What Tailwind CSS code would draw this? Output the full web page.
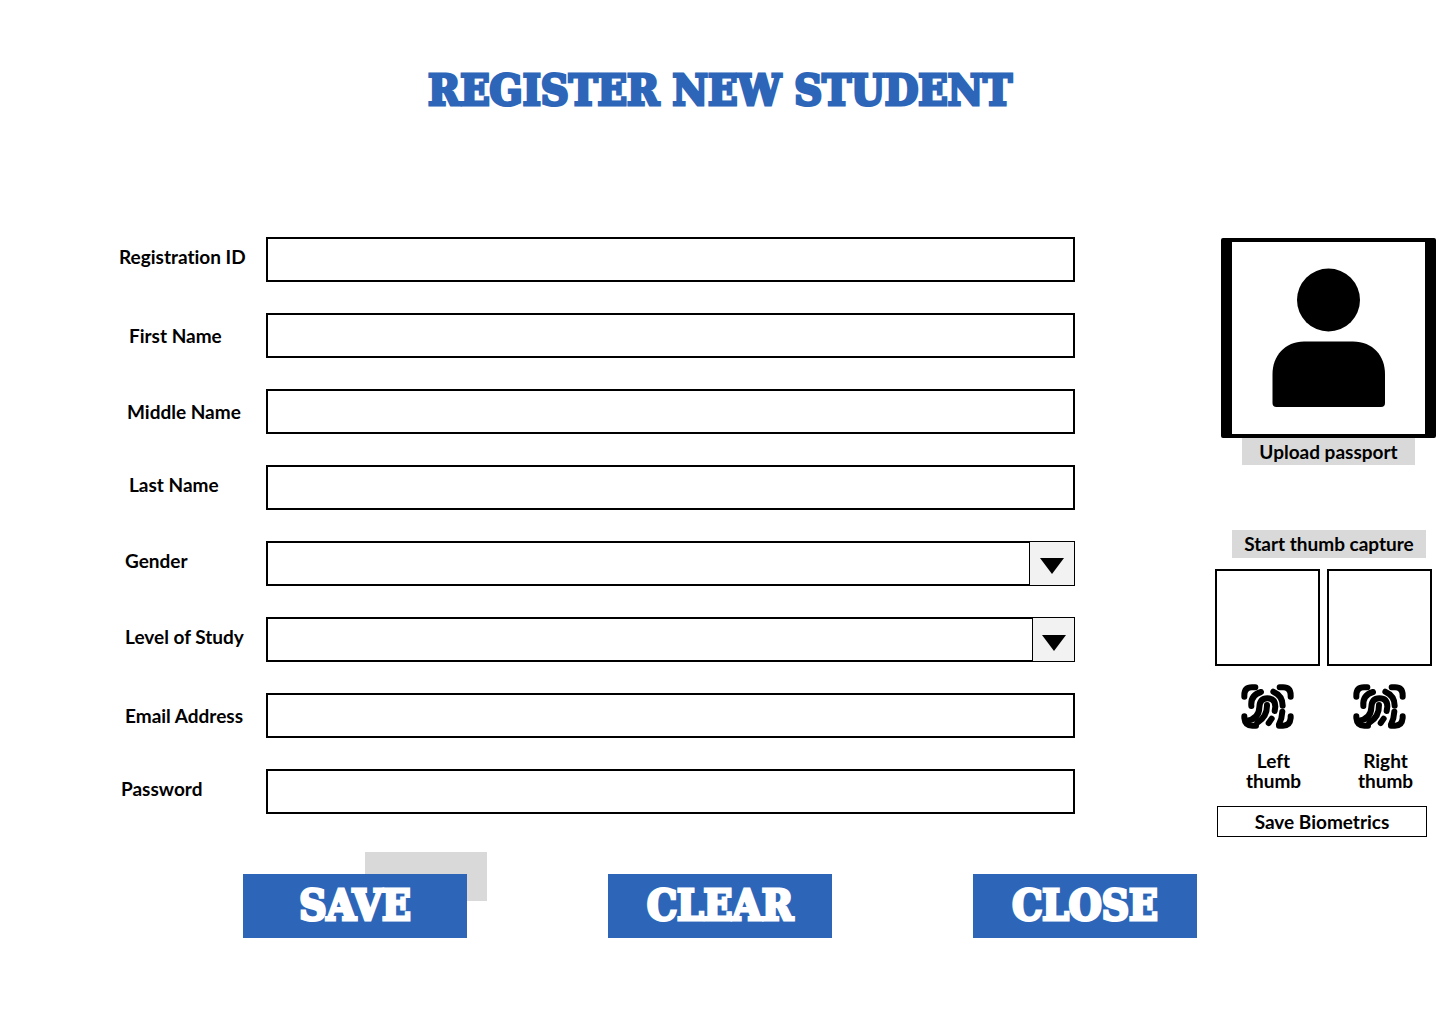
<!DOCTYPE html>
<html lang="en">
<head>
<meta charset="utf-8">
<meta name="viewport" content="width=device-width, initial-scale=1">
<title>Register New Student</title>
<script src="https://cdn.jsdelivr.net/npm/@tailwindcss/browser@4"></script>
</head>
<body class="min-h-screen bg-white font-['Lato',sans-serif] text-[19px] leading-7 font-bold text-black [font-variant-ligatures:none]">
<svg class="hidden" aria-hidden="true">
  <symbol id="fingerprint" viewBox="35 28 159 135">
    <g fill="none" stroke="currentColor" stroke-width="18" stroke-linecap="round" stroke-linejoin="round">
      <path d="M45 66V62Q45 38 68 38H78M151 38H161Q184 38 184 62V66M45 125V130Q47 153 69 153H80M184 125V130Q182 153 161 153H149"/>
      <path d="M66 94Q63 61 95 52M132 51Q160 63 160 93"/>
      <path d="M52 138Q89 133 90 98Q91 71 114 71Q138 71 138 96L136 109"/>
      <path d="M113 91Q114 126 84 144M127 132L118 145M159 111Q158 132 149 149"/>
    </g>
  </symbol>
</svg>
<header class="pt-[60px] text-center">
  <h1 class="font-['DejaVu_Serif_Condensed','DejaVu_Serif',serif] text-[43px] leading-[60px] font-bold text-[#2d66b9] [-webkit-text-stroke:3px_#2d66b9]">REGISTER NEW STUDENT</h1>
</header>
<main class="pt-[117px] pb-[86px]">
  <div class="flex items-start gap-[140px] pl-[119px]">
    <form id="student" class="grid flex-1 auto-rows-[45px] grid-cols-[147px_1fr] items-center gap-y-[31px]">
      <label for="reg" class="pb-1.5">Registration ID</label>
      <input id="reg" type="text" class="h-full w-full border-2 border-black px-3">
      <label for="first" class="pl-2.5">First Name</label>
      <input id="first" type="text" class="h-full w-full border-2 border-black px-3">
      <label for="middle" class="pl-2">Middle Name</label>
      <input id="middle" type="text" class="h-full w-full border-2 border-black px-3">
      <label for="last" class="pb-1.5 pl-2.5">Last Name</label>
      <input id="last" type="text" class="h-full w-full border-2 border-black px-3">
      <label for="gender" class="pb-1.5 pl-1.5">Gender</label>
      <div class="relative h-full">
        <select id="gender" class="h-full w-full appearance-none border-2 border-black px-3"><option></option></select>
        <span class="pointer-events-none absolute inset-y-0 right-0 flex w-[46px] items-center justify-center border border-black bg-[#f2f2f2]">
          <svg class="mt-1 h-4 w-6" viewBox="0 0 24 16"><path d="M0 0H24L12 16Z"/></svg>
        </span>
      </div>
      <label for="level" class="pb-1.5 pl-1.5">Level of Study</label>
      <div class="relative h-full">
        <select id="level" class="h-full w-full appearance-none border-2 border-black px-3"><option></option></select>
        <span class="pointer-events-none absolute inset-y-0 right-0 flex w-[43px] items-center justify-center border border-black bg-[#f2f2f2]">
          <svg class="mt-1.5 h-4 w-6" viewBox="0 0 24 16"><path d="M0 0H24L12 16Z"/></svg>
        </span>
      </div>
      <label for="email" class="pl-1.5">Email Address</label>
      <input id="email" type="email" class="h-full w-full border-2 border-black px-3">
      <label for="password" class="pb-1.5 pl-0.5">Password</label>
      <input id="password" type="password" class="h-full w-full border-2 border-black px-3">
    </form>
    <aside class="flex w-[225px] flex-col pt-px">
      <div class="mr-1 ml-[6px] flex h-[200px] items-center justify-center rounded-xs border-x-[11px] border-y-4 border-black">
        <svg class="h-[140px] w-[114px]" viewBox="0 0 114 140" role="img" aria-label="Passport photo"><circle cx="56.500" cy="32" r="31.500"/><path d="M32 73.500H81C101 73.500 113 88 113 106V135Q113 139 109 139H4.500Q.5 139 .5 135V106C.5 88 13 73.500 32 73.500Z"/></svg>
      </div>
      <button type="button" class="ml-[27px] h-[27px] w-[173px] bg-[#d9d9d9] leading-7">Upload passport</button>
      <button type="button" class="mt-[65px] ml-[17px] h-7 w-[194px] bg-[#d9d9d9] leading-7">Start thumb capture</button>
      <div class="mt-[11px] flex gap-[7px]">
        <div class="h-[97px] w-[105px] border-2 border-black"></div>
        <div class="h-[97px] w-[105px] border-2 border-black"></div>
      </div>
      <div class="mt-[18px] flex gap-[7px] leading-5">
        <div class="flex w-[105px] flex-col items-center gap-[22px]">
          <svg class="h-[45px] w-[53px]"><use href="#fingerprint"/></svg>
          <p class="pl-3 text-center">Left<br>thumb</p>
        </div>
        <div class="flex w-[105px] flex-col items-center gap-[22px]">
          <svg class="h-[45px] w-[53px]"><use href="#fingerprint"/></svg>
          <p class="pl-3 text-center">Right<br>thumb</p>
        </div>
      </div>
      <button type="button" class="mt-[15px] ml-0.5 h-[31px] w-[210px] border border-black leading-7">Save Biometrics</button>
    </aside>
  </div>
  <div class="mt-[37px] flex justify-between px-[243px] font-['DejaVu_Serif_Condensed','DejaVu_Serif',serif] text-[42px]">
    <div class="relative">
      <div class="absolute -top-[22px] left-[122px] h-[49px] w-[122px] bg-[#d9d9d9]"></div>
      <button type="submit" form="student" class="relative h-16 w-56 bg-[#2d66b9] text-white [-webkit-text-stroke:3px_white]">SAVE</button>
    </div>
    <button type="reset" form="student" class="h-16 w-56 bg-[#2d66b9] text-white [-webkit-text-stroke:3px_white]">CLEAR</button>
    <button type="button" class="h-16 w-56 bg-[#2d66b9] text-white [-webkit-text-stroke:3px_white]">CLOSE</button>
  </div>
</main>
</body>
</html>
